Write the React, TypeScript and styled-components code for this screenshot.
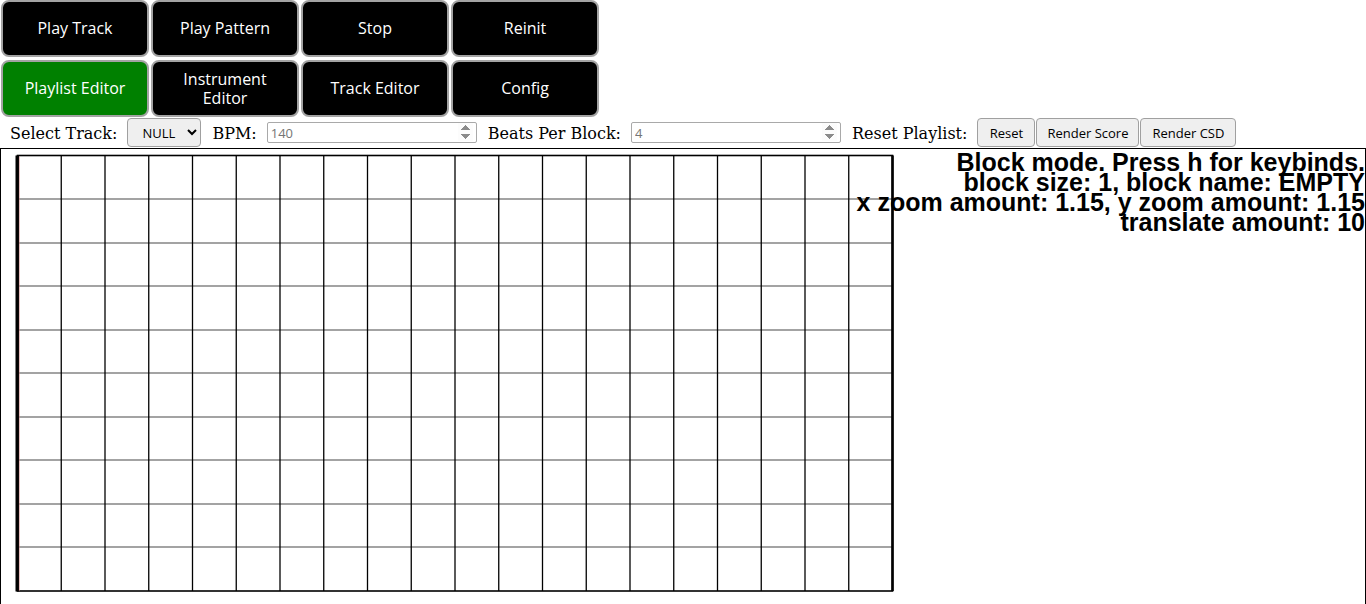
import React from 'react'
import styled, { createGlobalStyle } from 'styled-components'

const GlobalStyle = createGlobalStyle`
  html, body {
    margin: 0;
    padding: 0;
    background: #ffffff;
    overflow: hidden;
  }
  body {
    font-family: "DejaVu Serif", serif;
    font-size: 16px;
    color: #000;
  }
`

const Page = styled.div`
  width: 1366px;
  height: 604px;
  overflow: hidden;
`

const NavGrid = styled.div`
  display: grid;
  grid-template-columns: repeat(4, 148px);
  grid-auto-rows: 57px;
  column-gap: 2px;
  row-gap: 3px;
  padding-left: 1px;
`

const NavButton = styled.button<{ $active?: boolean }>`
  box-sizing: border-box;
  width: 100%;
  height: 100%;
  padding: 0 12px;
  margin: 0;
  background: ${({ $active }) => ($active ? '#008000' : '#000000')};
  color: #ffffff;
  border: 2px solid #a3a3a3;
  border-radius: 8px;
  font-family: "Open Sans", "Noto Sans", sans-serif;
  font-size: 16px;
  line-height: 19px;
  cursor: pointer;
`

const Toolbar = styled.div`
  display: flex;
  align-items: center;
  height: 31px;
  padding-left: 10px;
`

const Label = styled.span<{ $gap?: number }>`
  font-family: "DejaVu Serif", serif;
  font-size: 16px;
  padding-top: 2px;
  margin-left: ${({ $gap }) => $gap ?? 0}px;
  white-space: nowrap;
`

const TrackSelect = styled.select`
  box-sizing: border-box;
  width: 74px;
  height: 29px;
  margin-left: 10px;
  padding: 0 6px 0 10px;
  font-family: "Open Sans", "Noto Sans", sans-serif;
  font-size: 13px;
  color: #000;
  background: #efefef;
  border: 1px solid #a0a0a0;
  border-radius: 4px;
`

const NumberInput = styled.input`
  box-sizing: border-box;
  width: 210px;
  height: 21px;
  margin-left: 10px;
  padding: 0 3px;
  font-family: "Open Sans", "Noto Sans", sans-serif;
  font-size: 13px;
  color: #757575;
  background: #ffffff;
  border: 1px solid #a9a9a9;
  border-radius: 2px;
  &::placeholder {
    color: #757575;
  }
  &::-webkit-inner-spin-button {
    opacity: 1;
    height: 19px;
  }
`

const ActionGroup = styled.div`
  display: flex;
  gap: 1px;
  margin-left: 10px;
`

const ActionButton = styled.button<{ $w: number }>`
  box-sizing: border-box;
  width: ${({ $w }) => $w}px;
  height: 29px;
  padding: 0;
  font-family: "Open Sans", "Noto Sans", sans-serif;
  font-size: 13px;
  color: #000;
  background: #efefef;
  border: 1px solid #a0a0a0;
  border-radius: 4px;
`

const CanvasBox = styled.div`
  box-sizing: border-box;
  width: 1366px;
  height: 470px;
  border: 1px solid #000;
`

const COLS = 20
const ROWS = 10
const X0 = 16.5
const Y0 = 6.5
const CW = 43.75
const CH = 43.55

const lines = [
  'Block mode. Press h for keybinds.',
  'block size: 1, block name: EMPTY',
  'x zoom amount: 1.15, y zoom amount: 1.15',
  'translate amount: 10',
]

const PlaylistCanvas: React.FC = () => {
  const right = X0 + COLS * CW
  const bottom = Y0 + ROWS * CH
  return (
    <svg width={1364} height={468} style={{ display: 'block' }}>
      {Array.from({ length: ROWS - 1 }, (_, i) => {
        const y = Math.round(Y0 + (i + 1) * CH)
        return <line key={'h' + i} x1={X0} x2={right} y1={y} y2={y} stroke="#858585" strokeWidth={1.6} />
      })}
      {Array.from({ length: COLS - 1 }, (_, i) => {
        const x = X0 + (i + 1) * CW
        return <line key={'v' + i} x1={x} x2={x} y1={Y0} y2={bottom} stroke="#000" strokeWidth={1.3} />
      })}
      <rect x={X0} y={Y0} width={right - X0} height={bottom - Y0} fill="none" stroke="#000" strokeWidth={1.6} />
      <line x1={16.3} x2={16.3} y1={Y0} y2={bottom + 0.5} stroke="#000" strokeWidth={3.6} />
      <line x1={18.4} x2={18.4} y1={Y0 + 1} y2={bottom} stroke="#e08a8a" strokeWidth={0.5} />
      <line x1={right} x2={right} y1={Y0} y2={bottom} stroke="#000" strokeWidth={2.6} />
      <g fontFamily='"Liberation Sans", Arial, sans-serif' fontWeight="bold" fontSize={25} textAnchor="end" fill="#000">
        {lines.map((t, i) => (
          <text key={i} x={1364} y={22 + i * 20}>{t}</text>
        ))}
      </g>
    </svg>
  )
}

const App: React.FC = () => {
  return (
    <Page>
      <GlobalStyle />
      <NavGrid>
        <NavButton>Play Track</NavButton>
        <NavButton>Play Pattern</NavButton>
        <NavButton>Stop</NavButton>
        <NavButton>Reinit</NavButton>
        <NavButton $active>Playlist Editor</NavButton>
        <NavButton>Instrument Editor</NavButton>
        <NavButton>Track Editor</NavButton>
        <NavButton>Config</NavButton>
      </NavGrid>
      <Toolbar>
        <Label>Select Track:</Label>
        <TrackSelect defaultValue="NULL">
          <option value="NULL">NULL</option>
        </TrackSelect>
        <Label $gap={11}>BPM:</Label>
        <NumberInput type="number" placeholder="140" />
        <Label $gap={11}>Beats Per Block:</Label>
        <NumberInput type="number" placeholder="4" />
        <Label $gap={11}>Reset Playlist:</Label>
        <ActionGroup>
          <ActionButton $w={58}>Reset</ActionButton>
          <ActionButton $w={103}>Render Score</ActionButton>
          <ActionButton $w={96}>Render CSD</ActionButton>
        </ActionGroup>
      </Toolbar>
      <CanvasBox>
        <PlaylistCanvas />
      </CanvasBox>
    </Page>
  )
}

export default App
